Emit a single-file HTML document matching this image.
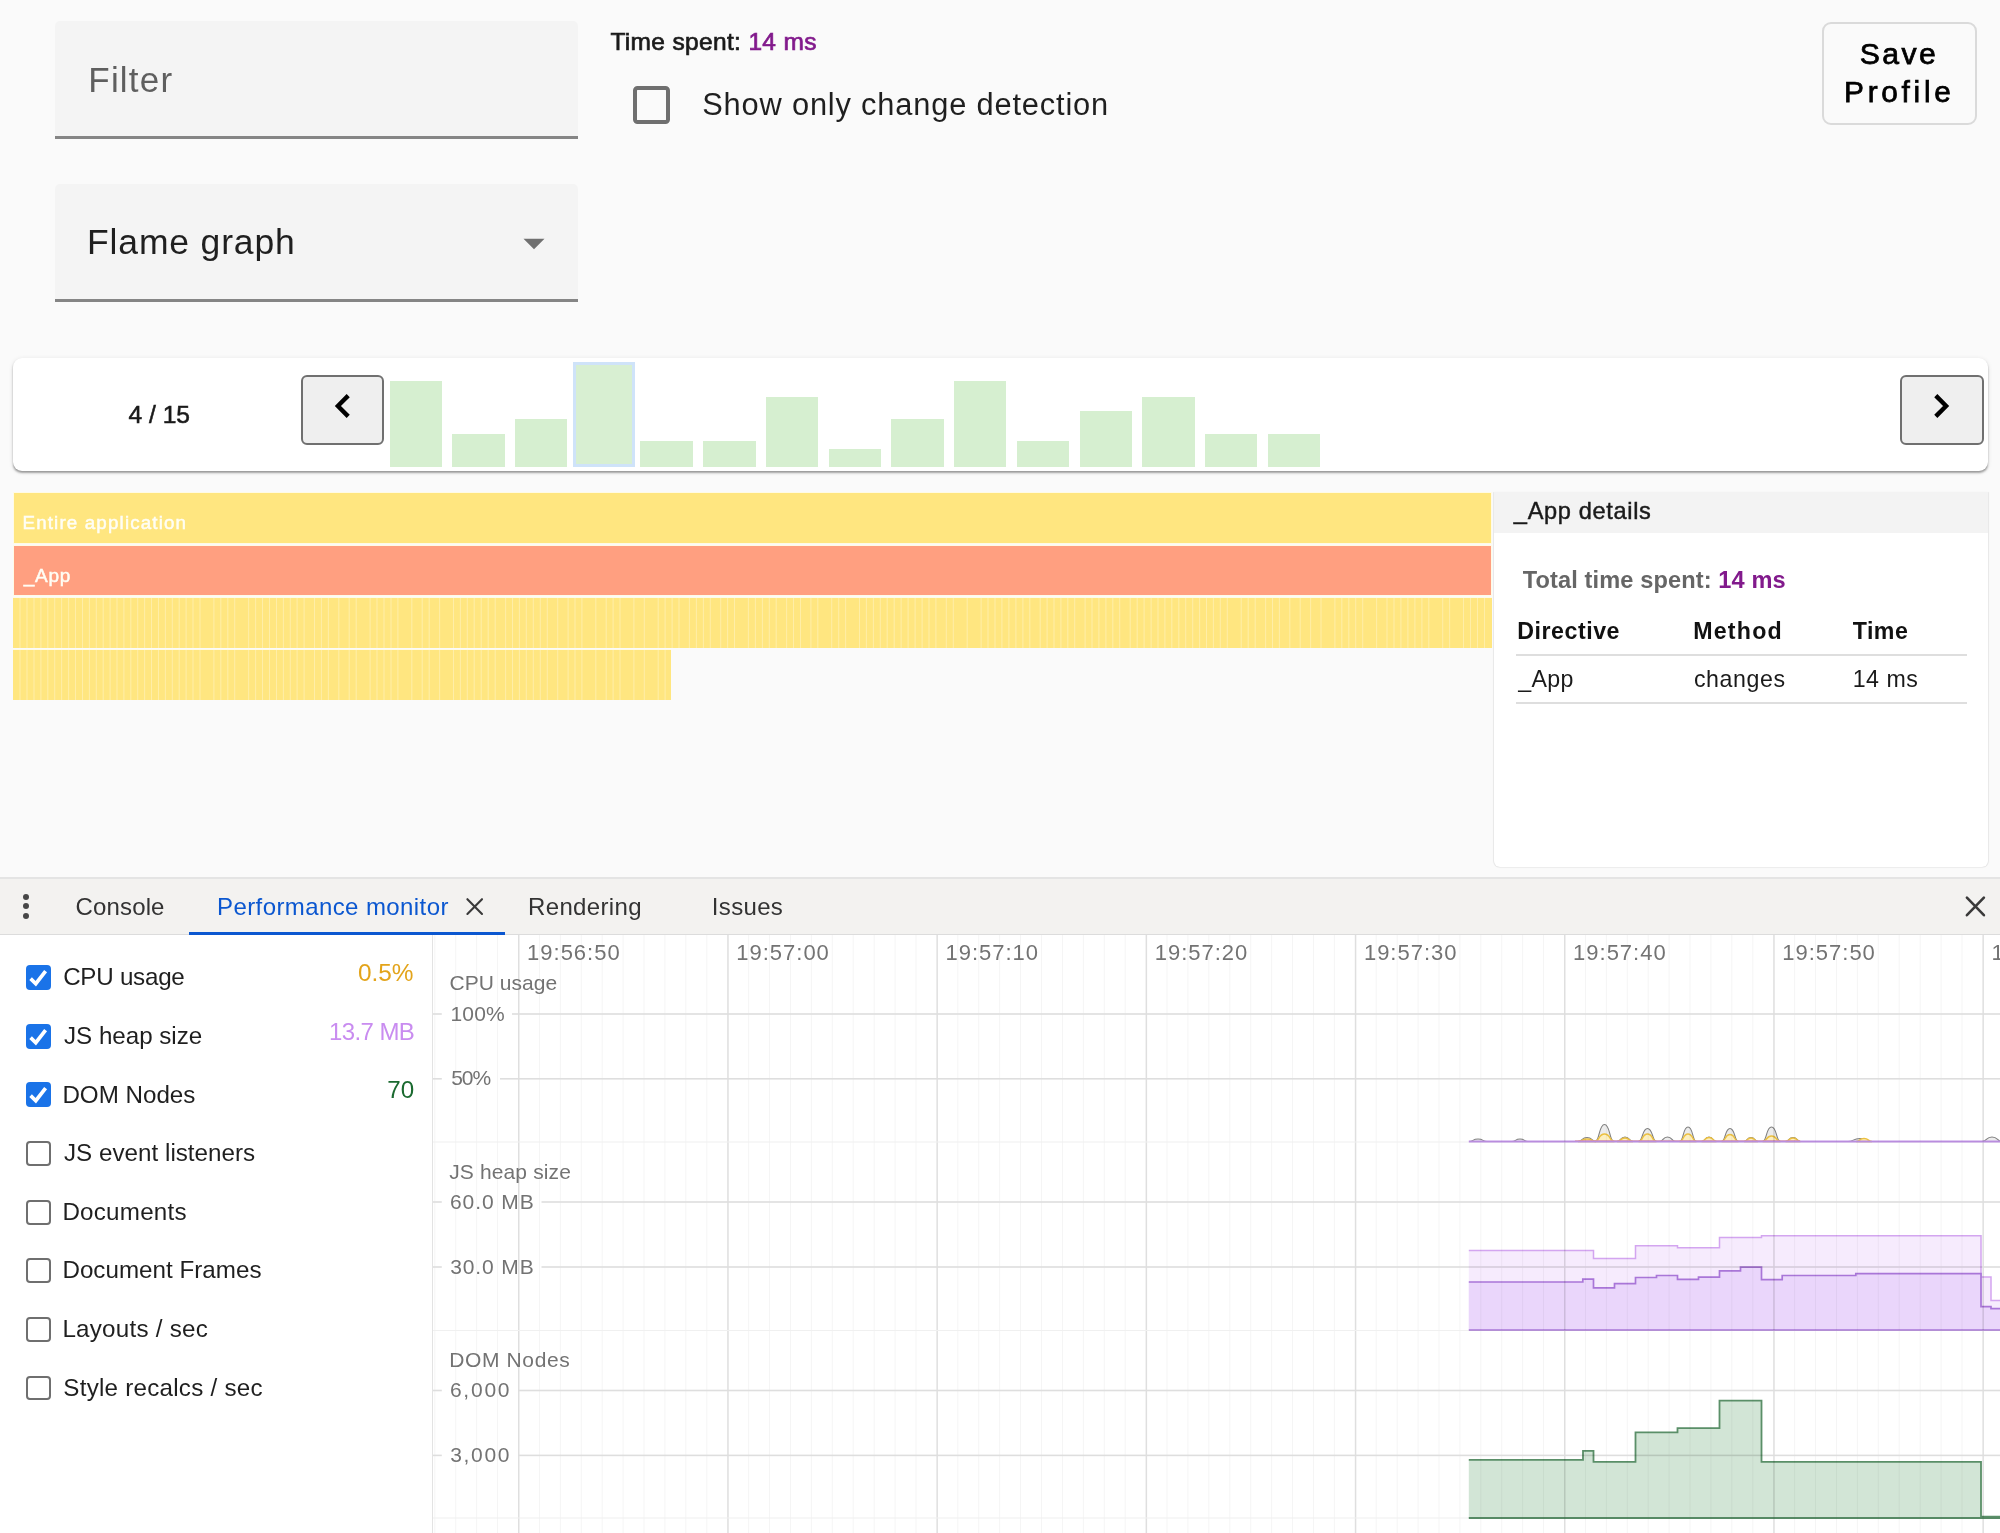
<!DOCTYPE html>
<html><head><meta charset="utf-8"><style>
html,body{margin:0;padding:0;}
body{width:2000px;height:1533px;overflow:hidden;position:relative;background:#fafafa;font-family:"Liberation Sans",sans-serif;}
.t{position:absolute;white-space:pre;}
.r{position:absolute;box-sizing:border-box;}
svg{position:absolute;}
</style></head><body>
<div class="r" style="left:55.00px;top:21.00px;width:523.00px;height:117.00px;background:#f4f4f4;border-radius:5px 5px 0 0;"></div>
<div class="r" style="left:55.00px;top:136.30px;width:523.00px;height:2.40px;background:#858585;"></div>
<div class="t" style="left:88.33px;top:62.37px;font-size:35.00px;line-height:35.00px;color:#5f5f5f;font-weight:normal;letter-spacing:1.195px;">Filter</div>
<div class="r" style="left:55.00px;top:184.00px;width:523.00px;height:117.00px;background:#f4f4f4;border-radius:5px 5px 0 0;"></div>
<div class="r" style="left:55.00px;top:299.20px;width:523.00px;height:2.40px;background:#858585;"></div>
<div class="t" style="left:87.09px;top:224.85px;font-size:35.50px;line-height:35.50px;color:#1f1f1f;font-weight:normal;letter-spacing:0.833px;">Flame graph</div>
<svg style="left:523px;top:238px" width="22" height="12"><path d="M0.5 0.8 L21.5 0.8 L11 11.2 Z" fill="#707070"/></svg>
<div class="t" style="left:610.45px;top:30.36px;font-size:24.50px;line-height:24.50px;color:#1a1a1a;font-weight:normal;letter-spacing:0.339px;-webkit-text-stroke:0.7px currentColor;">Time spent: <span style="color:#821a8c">14 ms</span></div>
<div class="r" style="left:632.50px;top:86.20px;width:37.10px;height:37.50px;border:4px solid #6f6f6f;border-radius:4.5px;"></div>
<div class="t" style="left:702.20px;top:89.53px;font-size:30.80px;line-height:30.80px;color:#1f1f1f;font-weight:normal;letter-spacing:0.829px;">Show only change detection</div>
<div class="r" style="left:1822.00px;top:22.00px;width:155.00px;height:103.00px;border:2px solid #dadada;border-radius:9px;"></div>
<div class="t" style="left:1859.63px;top:39.14px;font-size:30.20px;line-height:30.20px;color:#000;font-weight:normal;letter-spacing:2.426px;-webkit-text-stroke:0.75px currentColor;">Save</div>
<div class="t" style="left:1844.06px;top:77.37px;font-size:29.80px;line-height:29.80px;color:#000;font-weight:normal;letter-spacing:3.717px;-webkit-text-stroke:0.75px currentColor;">Profile</div>
<div class="r" style="left:13.00px;top:358.00px;width:1975.00px;height:113.00px;background:#fff;border-radius:9px;box-shadow:0 2px 2px -0.5px rgba(0,0,0,.3),0 1px 1px 0 rgba(0,0,0,.06),0 1px 5px 0 rgba(0,0,0,.1);"></div>
<div class="t" style="left:128.44px;top:402.58px;font-size:24.60px;line-height:24.60px;color:#1a1a1a;font-weight:normal;letter-spacing:0.010px;-webkit-text-stroke:0.55px currentColor;">4 / 15</div>
<div class="r" style="left:301.00px;top:375.00px;width:83.00px;height:69.60px;background:#efefef;border:2px solid #707070;border-radius:6px;"></div>
<svg style="left:330px;top:390px" width="24" height="32"><path d="M18.2 5.6 L7.9 16 L18.2 26.4" fill="none" stroke="#000" stroke-width="4.4"/></svg>
<div class="r" style="left:1900.00px;top:375.00px;width:83.50px;height:69.60px;background:#efefef;border:2px solid #707070;border-radius:6px;"></div>
<svg style="left:1930px;top:390px" width="24" height="32"><path d="M5.8 5.6 L16.1 16 L5.8 26.4" fill="none" stroke="#000" stroke-width="4.4"/></svg>
<div class="r" style="left:389.60px;top:381.00px;width:52.40px;height:85.70px;background:#d6efd0;"></div>
<div class="r" style="left:452.32px;top:433.50px;width:52.40px;height:33.20px;background:#d6efd0;"></div>
<div class="r" style="left:515.04px;top:418.80px;width:52.40px;height:47.90px;background:#d6efd0;"></div>
<div class="r" style="left:572.90px;top:362.40px;width:62.20px;height:104.50px;border:3.2px solid #cfe3f9;background:#d8efd2;"></div>
<div class="r" style="left:640.48px;top:440.80px;width:52.40px;height:25.90px;background:#d6efd0;"></div>
<div class="r" style="left:703.20px;top:440.80px;width:52.40px;height:25.90px;background:#d6efd0;"></div>
<div class="r" style="left:765.92px;top:396.70px;width:52.40px;height:70.00px;background:#d6efd0;"></div>
<div class="r" style="left:828.64px;top:449.20px;width:52.40px;height:17.50px;background:#d6efd0;"></div>
<div class="r" style="left:891.36px;top:418.80px;width:52.40px;height:47.90px;background:#d6efd0;"></div>
<div class="r" style="left:954.08px;top:381.00px;width:52.40px;height:85.70px;background:#d6efd0;"></div>
<div class="r" style="left:1016.80px;top:440.80px;width:52.40px;height:25.90px;background:#d6efd0;"></div>
<div class="r" style="left:1079.52px;top:411.40px;width:52.40px;height:55.30px;background:#d6efd0;"></div>
<div class="r" style="left:1142.24px;top:396.70px;width:52.40px;height:70.00px;background:#d6efd0;"></div>
<div class="r" style="left:1204.96px;top:433.50px;width:52.40px;height:33.20px;background:#d6efd0;"></div>
<div class="r" style="left:1267.68px;top:433.50px;width:52.40px;height:33.20px;background:#d6efd0;"></div>
<div class="r" style="left:13.00px;top:492.30px;width:1479.00px;height:51.70px;border:1px solid #fffbe6;background:#ffe680"></div>
<div class="r" style="left:13.00px;top:544.50px;width:1479.00px;height:51.50px;border:1px solid #fffbe6;background:#ff9f80"></div>
<div class="r" style="left:13.00px;top:597.50px;width:1479.00px;height:50.50px;background:#ffe680"></div>
<svg style="left:13px;top:597.5px" width="1479.0" height="50.5"><g fill="#fff6c8" opacity="0.55"><rect x="6.5" y="0" width="1" height="50.5"/><rect x="13.5" y="0" width="1" height="50.5"/><rect x="20.5" y="0" width="1" height="50.5"/><rect x="27.4" y="0" width="1" height="50.5"/><rect x="34.3" y="0" width="1" height="50.5"/><rect x="41.2" y="0" width="1" height="50.5"/><rect x="48.1" y="0" width="1" height="50.5"/><rect x="55.1" y="0" width="1" height="50.5"/><rect x="62.0" y="0" width="1" height="50.5"/><rect x="69.0" y="0" width="1" height="50.5"/><rect x="75.9" y="0" width="1" height="50.5"/><rect x="82.8" y="0" width="1" height="50.5"/><rect x="89.7" y="0" width="1" height="50.5"/><rect x="96.6" y="0" width="1" height="50.5"/><rect x="103.5" y="0" width="1" height="50.5"/><rect x="110.4" y="0" width="1" height="50.5"/><rect x="117.3" y="0" width="1" height="50.5"/><rect x="124.2" y="0" width="1" height="50.5"/><rect x="131.1" y="0" width="1" height="50.5"/><rect x="138.0" y="0" width="1" height="50.5"/><rect x="145.0" y="0" width="1" height="50.5"/><rect x="151.9" y="0" width="1" height="50.5"/><rect x="158.8" y="0" width="1" height="50.5"/><rect x="165.7" y="0" width="1" height="50.5"/><rect x="172.6" y="0" width="1" height="50.5"/><rect x="179.5" y="0" width="1" height="50.5"/><rect x="186.5" y="0" width="1" height="50.5"/><rect x="200.4" y="0" width="1" height="50.5"/><rect x="207.3" y="0" width="1" height="50.5"/><rect x="214.3" y="0" width="1" height="50.5"/><rect x="221.2" y="0" width="1" height="50.5"/><rect x="235.1" y="0" width="1" height="50.5"/><rect x="242.1" y="0" width="1" height="50.5"/><rect x="249.0" y="0" width="1" height="50.5"/><rect x="256.0" y="0" width="1" height="50.5"/><rect x="263.0" y="0" width="1" height="50.5"/><rect x="269.9" y="0" width="1" height="50.5"/><rect x="276.8" y="0" width="1" height="50.5"/><rect x="283.6" y="0" width="1" height="50.5"/><rect x="290.6" y="0" width="1" height="50.5"/><rect x="301.0" y="0" width="1" height="50.5"/><rect x="307.9" y="0" width="1" height="50.5"/><rect x="314.9" y="0" width="1" height="50.5"/><rect x="325.3" y="0" width="1" height="50.5"/><rect x="335.7" y="0" width="1" height="50.5"/><rect x="342.7" y="0" width="1" height="50.5"/><rect x="356.6" y="0" width="1" height="50.5"/><rect x="363.5" y="0" width="1" height="50.5"/><rect x="370.5" y="0" width="1" height="50.5"/><rect x="377.5" y="0" width="1" height="50.5"/><rect x="384.4" y="0" width="1" height="50.5"/><rect x="398.3" y="0" width="1" height="50.5"/><rect x="408.7" y="0" width="1" height="50.5"/><rect x="415.7" y="0" width="1" height="50.5"/><rect x="426.1" y="0" width="1" height="50.5"/><rect x="440.0" y="0" width="1" height="50.5"/><rect x="446.9" y="0" width="1" height="50.5"/><rect x="453.8" y="0" width="1" height="50.5"/><rect x="460.7" y="0" width="1" height="50.5"/><rect x="467.7" y="0" width="1" height="50.5"/><rect x="474.7" y="0" width="1" height="50.5"/><rect x="481.7" y="0" width="1" height="50.5"/><rect x="492.1" y="0" width="1" height="50.5"/><rect x="499.0" y="0" width="1" height="50.5"/><rect x="505.9" y="0" width="1" height="50.5"/><rect x="512.8" y="0" width="1" height="50.5"/><rect x="519.8" y="0" width="1" height="50.5"/><rect x="526.8" y="0" width="1" height="50.5"/><rect x="533.8" y="0" width="1" height="50.5"/><rect x="544.2" y="0" width="1" height="50.5"/><rect x="554.6" y="0" width="1" height="50.5"/><rect x="561.5" y="0" width="1" height="50.5"/><rect x="568.4" y="0" width="1" height="50.5"/><rect x="582.3" y="0" width="1" height="50.5"/><rect x="592.7" y="0" width="1" height="50.5"/><rect x="599.6" y="0" width="1" height="50.5"/><rect x="606.5" y="0" width="1" height="50.5"/><rect x="620.4" y="0" width="1" height="50.5"/><rect x="630.8" y="0" width="1" height="50.5"/><rect x="644.7" y="0" width="1" height="50.5"/><rect x="651.6" y="0" width="1" height="50.5"/><rect x="658.6" y="0" width="1" height="50.5"/><rect x="665.5" y="0" width="1" height="50.5"/><rect x="675.9" y="0" width="1" height="50.5"/><rect x="682.9" y="0" width="1" height="50.5"/><rect x="689.9" y="0" width="1" height="50.5"/><rect x="696.8" y="0" width="1" height="50.5"/><rect x="707.2" y="0" width="1" height="50.5"/><rect x="714.1" y="0" width="1" height="50.5"/><rect x="721.0" y="0" width="1" height="50.5"/><rect x="734.9" y="0" width="1" height="50.5"/><rect x="741.9" y="0" width="1" height="50.5"/><rect x="748.9" y="0" width="1" height="50.5"/><rect x="755.8" y="0" width="1" height="50.5"/><rect x="762.7" y="0" width="1" height="50.5"/><rect x="773.1" y="0" width="1" height="50.5"/><rect x="780.0" y="0" width="1" height="50.5"/><rect x="787.0" y="0" width="1" height="50.5"/><rect x="797.4" y="0" width="1" height="50.5"/><rect x="804.3" y="0" width="1" height="50.5"/><rect x="818.2" y="0" width="1" height="50.5"/><rect x="825.2" y="0" width="1" height="50.5"/><rect x="832.1" y="0" width="1" height="50.5"/><rect x="846.0" y="0" width="1" height="50.5"/><rect x="852.9" y="0" width="1" height="50.5"/><rect x="859.9" y="0" width="1" height="50.5"/><rect x="866.8" y="0" width="1" height="50.5"/><rect x="873.7" y="0" width="1" height="50.5"/><rect x="880.7" y="0" width="1" height="50.5"/><rect x="887.6" y="0" width="1" height="50.5"/><rect x="894.6" y="0" width="1" height="50.5"/><rect x="901.6" y="0" width="1" height="50.5"/><rect x="908.6" y="0" width="1" height="50.5"/><rect x="915.5" y="0" width="1" height="50.5"/><rect x="922.4" y="0" width="1" height="50.5"/><rect x="932.8" y="0" width="1" height="50.5"/><rect x="939.8" y="0" width="1" height="50.5"/><rect x="953.7" y="0" width="1" height="50.5"/><rect x="967.6" y="0" width="1" height="50.5"/><rect x="974.5" y="0" width="1" height="50.5"/><rect x="981.5" y="0" width="1" height="50.5"/><rect x="988.4" y="0" width="1" height="50.5"/><rect x="995.4" y="0" width="1" height="50.5"/><rect x="1002.4" y="0" width="1" height="50.5"/><rect x="1009.4" y="0" width="1" height="50.5"/><rect x="1016.3" y="0" width="1" height="50.5"/><rect x="1026.7" y="0" width="1" height="50.5"/><rect x="1033.6" y="0" width="1" height="50.5"/><rect x="1040.5" y="0" width="1" height="50.5"/><rect x="1047.4" y="0" width="1" height="50.5"/><rect x="1054.3" y="0" width="1" height="50.5"/><rect x="1061.2" y="0" width="1" height="50.5"/><rect x="1071.6" y="0" width="1" height="50.5"/><rect x="1078.5" y="0" width="1" height="50.5"/><rect x="1085.4" y="0" width="1" height="50.5"/><rect x="1092.4" y="0" width="1" height="50.5"/><rect x="1099.3" y="0" width="1" height="50.5"/><rect x="1106.2" y="0" width="1" height="50.5"/><rect x="1116.7" y="0" width="1" height="50.5"/><rect x="1123.7" y="0" width="1" height="50.5"/><rect x="1130.6" y="0" width="1" height="50.5"/><rect x="1137.6" y="0" width="1" height="50.5"/><rect x="1144.5" y="0" width="1" height="50.5"/><rect x="1151.4" y="0" width="1" height="50.5"/><rect x="1158.3" y="0" width="1" height="50.5"/><rect x="1165.3" y="0" width="1" height="50.5"/><rect x="1172.2" y="0" width="1" height="50.5"/><rect x="1179.2" y="0" width="1" height="50.5"/><rect x="1186.1" y="0" width="1" height="50.5"/><rect x="1193.0" y="0" width="1" height="50.5"/><rect x="1199.9" y="0" width="1" height="50.5"/><rect x="1206.8" y="0" width="1" height="50.5"/><rect x="1213.8" y="0" width="1" height="50.5"/><rect x="1227.7" y="0" width="1" height="50.5"/><rect x="1234.7" y="0" width="1" height="50.5"/><rect x="1241.7" y="0" width="1" height="50.5"/><rect x="1252.1" y="0" width="1" height="50.5"/><rect x="1259.0" y="0" width="1" height="50.5"/><rect x="1265.9" y="0" width="1" height="50.5"/><rect x="1276.3" y="0" width="1" height="50.5"/><rect x="1286.7" y="0" width="1" height="50.5"/><rect x="1297.1" y="0" width="1" height="50.5"/><rect x="1307.5" y="0" width="1" height="50.5"/><rect x="1321.4" y="0" width="1" height="50.5"/><rect x="1328.3" y="0" width="1" height="50.5"/><rect x="1335.3" y="0" width="1" height="50.5"/><rect x="1342.2" y="0" width="1" height="50.5"/><rect x="1349.2" y="0" width="1" height="50.5"/><rect x="1363.1" y="0" width="1" height="50.5"/><rect x="1373.5" y="0" width="1" height="50.5"/><rect x="1380.5" y="0" width="1" height="50.5"/><rect x="1387.4" y="0" width="1" height="50.5"/><rect x="1394.4" y="0" width="1" height="50.5"/><rect x="1401.4" y="0" width="1" height="50.5"/><rect x="1408.4" y="0" width="1" height="50.5"/><rect x="1415.3" y="0" width="1" height="50.5"/><rect x="1429.2" y="0" width="1" height="50.5"/><rect x="1436.1" y="0" width="1" height="50.5"/><rect x="1450.0" y="0" width="1" height="50.5"/><rect x="1457.0" y="0" width="1" height="50.5"/><rect x="1464.0" y="0" width="1" height="50.5"/><rect x="1471.0" y="0" width="1" height="50.5"/></g></svg>
<div class="r" style="left:13.00px;top:596.50px;width:1479.00px;height:1.00px;background:#fffbe6"></div>
<div class="r" style="left:13.00px;top:649.80px;width:658.30px;height:50.40px;background:#ffe680"></div>
<svg style="left:13px;top:649.8px" width="658.3" height="50.4"><g fill="#fff6c8" opacity="0.55"><rect x="6.5" y="0" width="1" height="50.4"/><rect x="13.5" y="0" width="1" height="50.4"/><rect x="20.5" y="0" width="1" height="50.4"/><rect x="27.4" y="0" width="1" height="50.4"/><rect x="34.3" y="0" width="1" height="50.4"/><rect x="41.2" y="0" width="1" height="50.4"/><rect x="48.1" y="0" width="1" height="50.4"/><rect x="55.1" y="0" width="1" height="50.4"/><rect x="62.0" y="0" width="1" height="50.4"/><rect x="69.0" y="0" width="1" height="50.4"/><rect x="75.9" y="0" width="1" height="50.4"/><rect x="82.8" y="0" width="1" height="50.4"/><rect x="89.7" y="0" width="1" height="50.4"/><rect x="96.6" y="0" width="1" height="50.4"/><rect x="103.5" y="0" width="1" height="50.4"/><rect x="110.4" y="0" width="1" height="50.4"/><rect x="117.3" y="0" width="1" height="50.4"/><rect x="124.2" y="0" width="1" height="50.4"/><rect x="131.1" y="0" width="1" height="50.4"/><rect x="138.0" y="0" width="1" height="50.4"/><rect x="145.0" y="0" width="1" height="50.4"/><rect x="151.9" y="0" width="1" height="50.4"/><rect x="158.8" y="0" width="1" height="50.4"/><rect x="165.7" y="0" width="1" height="50.4"/><rect x="172.6" y="0" width="1" height="50.4"/><rect x="179.5" y="0" width="1" height="50.4"/><rect x="186.5" y="0" width="1" height="50.4"/><rect x="200.4" y="0" width="1" height="50.4"/><rect x="207.3" y="0" width="1" height="50.4"/><rect x="214.3" y="0" width="1" height="50.4"/><rect x="221.2" y="0" width="1" height="50.4"/><rect x="235.1" y="0" width="1" height="50.4"/><rect x="242.1" y="0" width="1" height="50.4"/><rect x="249.0" y="0" width="1" height="50.4"/><rect x="256.0" y="0" width="1" height="50.4"/><rect x="263.0" y="0" width="1" height="50.4"/><rect x="269.9" y="0" width="1" height="50.4"/><rect x="276.8" y="0" width="1" height="50.4"/><rect x="283.6" y="0" width="1" height="50.4"/><rect x="290.6" y="0" width="1" height="50.4"/><rect x="301.0" y="0" width="1" height="50.4"/><rect x="307.9" y="0" width="1" height="50.4"/><rect x="314.9" y="0" width="1" height="50.4"/><rect x="325.3" y="0" width="1" height="50.4"/><rect x="335.7" y="0" width="1" height="50.4"/><rect x="342.7" y="0" width="1" height="50.4"/><rect x="356.6" y="0" width="1" height="50.4"/><rect x="363.5" y="0" width="1" height="50.4"/><rect x="370.5" y="0" width="1" height="50.4"/><rect x="377.5" y="0" width="1" height="50.4"/><rect x="384.4" y="0" width="1" height="50.4"/><rect x="398.3" y="0" width="1" height="50.4"/><rect x="408.7" y="0" width="1" height="50.4"/><rect x="415.7" y="0" width="1" height="50.4"/><rect x="426.1" y="0" width="1" height="50.4"/><rect x="440.0" y="0" width="1" height="50.4"/><rect x="446.9" y="0" width="1" height="50.4"/><rect x="453.8" y="0" width="1" height="50.4"/><rect x="460.7" y="0" width="1" height="50.4"/><rect x="467.7" y="0" width="1" height="50.4"/><rect x="474.7" y="0" width="1" height="50.4"/><rect x="481.7" y="0" width="1" height="50.4"/><rect x="492.1" y="0" width="1" height="50.4"/><rect x="499.0" y="0" width="1" height="50.4"/><rect x="505.9" y="0" width="1" height="50.4"/><rect x="512.8" y="0" width="1" height="50.4"/><rect x="519.8" y="0" width="1" height="50.4"/><rect x="526.8" y="0" width="1" height="50.4"/><rect x="533.8" y="0" width="1" height="50.4"/><rect x="544.2" y="0" width="1" height="50.4"/><rect x="554.6" y="0" width="1" height="50.4"/><rect x="561.5" y="0" width="1" height="50.4"/><rect x="568.4" y="0" width="1" height="50.4"/><rect x="582.3" y="0" width="1" height="50.4"/><rect x="592.7" y="0" width="1" height="50.4"/><rect x="599.6" y="0" width="1" height="50.4"/><rect x="606.5" y="0" width="1" height="50.4"/><rect x="620.4" y="0" width="1" height="50.4"/><rect x="630.8" y="0" width="1" height="50.4"/><rect x="644.7" y="0" width="1" height="50.4"/><rect x="651.6" y="0" width="1" height="50.4"/></g></svg>
<div class="r" style="left:13.00px;top:648.80px;width:658.30px;height:1.00px;background:#fffbe6"></div>
<div class="t" style="left:22.46px;top:513.79px;font-size:18.80px;line-height:18.80px;color:#fffef5;font-weight:normal;letter-spacing:1.149px;-webkit-text-stroke:0.5px currentColor;">Entire application</div>
<div class="t" style="left:23.79px;top:565.82px;font-size:19.00px;line-height:19.00px;color:#fffef5;font-weight:normal;letter-spacing:0.712px;-webkit-text-stroke:0.5px currentColor;">_App</div>
<div class="r" style="left:1494.00px;top:492.00px;width:494.00px;height:375.00px;background:#fff;border-radius:0 0 6px 6px;box-shadow:-1px 0 1px rgba(0,0,0,.07),1px 0 1px rgba(0,0,0,.07),0 1px 1px rgba(0,0,0,.05);"></div>
<div class="r" style="left:1494.00px;top:492.00px;width:494.00px;height:41.00px;background:#f3f3f3;"></div>
<div class="t" style="left:1513.86px;top:500.02px;font-size:23.60px;line-height:23.60px;color:#1a1a1a;font-weight:normal;letter-spacing:0.646px;-webkit-text-stroke:0.45px currentColor;">_App details</div>
<div class="t" style="left:1522.73px;top:569.32px;font-size:23.60px;line-height:23.60px;color:#666;font-weight:bold;letter-spacing:0.111px;">Total time spent: <span style="color:#821a8c">14 ms</span></div>
<div class="t" style="left:1517.20px;top:620.06px;font-size:23.20px;line-height:23.20px;color:#111;font-weight:bold;letter-spacing:0.542px;">Directive</div>
<div class="t" style="left:1693.25px;top:620.06px;font-size:23.20px;line-height:23.20px;color:#111;font-weight:bold;letter-spacing:1.203px;">Method</div>
<div class="t" style="left:1852.74px;top:620.06px;font-size:23.20px;line-height:23.20px;color:#111;font-weight:bold;letter-spacing:0.468px;">Time</div>
<div class="r" style="left:1516.00px;top:654.00px;width:451.00px;height:2.00px;background:#dedede"></div>
<div class="t" style="left:1518.35px;top:668.36px;font-size:23.20px;line-height:23.20px;color:#1a1a1a;font-weight:normal;letter-spacing:0.314px;">_App</div>
<div class="t" style="left:1693.91px;top:668.36px;font-size:23.20px;line-height:23.20px;color:#1a1a1a;font-weight:normal;letter-spacing:0.602px;">changes</div>
<div class="t" style="left:1852.73px;top:668.36px;font-size:23.20px;line-height:23.20px;color:#1a1a1a;font-weight:normal;letter-spacing:0.482px;">14 ms</div>
<div class="r" style="left:1516.00px;top:702.00px;width:451.00px;height:2.00px;background:#dedede"></div>
<div class="r" style="left:0.00px;top:878.00px;width:2000.00px;height:57.00px;background:#f3f2f0"></div>
<div class="r" style="left:0.00px;top:876.80px;width:2000.00px;height:2.00px;background:#e4e4e4"></div>
<div class="r" style="left:0.00px;top:934.00px;width:2000.00px;height:1.00px;background:#dcdcdc"></div>
<div class="r" style="left:0.00px;top:935.00px;width:2000.00px;height:598.00px;background:#fff"></div>
<div class="r" style="left:22.80px;top:893.60px;width:6.00px;height:6.00px;background:#474747;border-radius:50%"></div>
<div class="r" style="left:22.80px;top:903.10px;width:6.00px;height:6.00px;background:#474747;border-radius:50%"></div>
<div class="r" style="left:22.80px;top:912.60px;width:6.00px;height:6.00px;background:#474747;border-radius:50%"></div>
<div class="t" style="left:75.58px;top:894.88px;font-size:24.00px;line-height:24.00px;color:#333;font-weight:normal;letter-spacing:0.138px;">Console</div>
<div class="t" style="left:217.03px;top:894.88px;font-size:24.00px;line-height:24.00px;color:#0b57d0;font-weight:normal;letter-spacing:0.405px;">Performance monitor</div>
<svg style="left:464px;top:895px" width="22" height="22"><path d="M3.4 4.2 L18 18.9 M18 4.2 L3.4 18.9" stroke="#3a3a3a" stroke-width="2.1" stroke-linecap="round"/></svg>
<div class="t" style="left:528.03px;top:894.88px;font-size:24.00px;line-height:24.00px;color:#333;font-weight:normal;letter-spacing:0.347px;">Rendering</div>
<div class="t" style="left:711.79px;top:894.88px;font-size:24.00px;line-height:24.00px;color:#333;font-weight:normal;letter-spacing:0.344px;">Issues</div>
<div class="r" style="left:189.00px;top:931.80px;width:316.00px;height:3.70px;background:#0b57d0"></div>
<svg style="left:1964px;top:895px" width="23" height="23"><path d="M2.9 2.6 L19.9 20.2 M19.9 2.6 L2.9 20.2" stroke="#3a3a3a" stroke-width="2.6" stroke-linecap="round"/></svg>
<div class="r" style="left:432.00px;top:935.00px;width:1.00px;height:598.00px;background:#e3e3e3"></div>
<div class="r" style="left:25.8px;top:965.20px;width:24.8px;height:24.8px;background:#1a73e8;border-radius:4px;"><svg style="left:0;top:0" width="25" height="25" viewBox="0 0 25 25"><path d="M4.6 13.6 L9.8 18.7 L19.6 6.2" fill="none" stroke="#fff" stroke-width="3.7"/></svg></div>
<div class="t" style="left:63.17px;top:965.31px;font-size:24.20px;line-height:24.20px;color:#1f1f1f;font-weight:normal;letter-spacing:-0.256px;">CPU usage</div>
<div class="r" style="left:25.8px;top:1023.83px;width:24.8px;height:24.8px;background:#1a73e8;border-radius:4px;"><svg style="left:0;top:0" width="25" height="25" viewBox="0 0 25 25"><path d="M4.6 13.6 L9.8 18.7 L19.6 6.2" fill="none" stroke="#fff" stroke-width="3.7"/></svg></div>
<div class="t" style="left:64.02px;top:1023.94px;font-size:24.20px;line-height:24.20px;color:#1f1f1f;font-weight:normal;letter-spacing:-0.028px;">JS heap size</div>
<div class="r" style="left:25.8px;top:1082.46px;width:24.8px;height:24.8px;background:#1a73e8;border-radius:4px;"><svg style="left:0;top:0" width="25" height="25" viewBox="0 0 25 25"><path d="M4.6 13.6 L9.8 18.7 L19.6 6.2" fill="none" stroke="#fff" stroke-width="3.7"/></svg></div>
<div class="t" style="left:62.41px;top:1082.57px;font-size:24.20px;line-height:24.20px;color:#1f1f1f;font-weight:normal;letter-spacing:-0.009px;">DOM Nodes</div>
<div class="r" style="left:25.80px;top:1141.09px;width:24.80px;height:24.80px;border:2px solid #6f6f6f;border-radius:4px;"></div>
<div class="t" style="left:64.02px;top:1141.20px;font-size:24.20px;line-height:24.20px;color:#1f1f1f;font-weight:normal;letter-spacing:0.015px;">JS event listeners</div>
<div class="r" style="left:25.80px;top:1199.72px;width:24.80px;height:24.80px;border:2px solid #6f6f6f;border-radius:4px;"></div>
<div class="t" style="left:62.41px;top:1199.83px;font-size:24.20px;line-height:24.20px;color:#1f1f1f;font-weight:normal;letter-spacing:0.233px;">Documents</div>
<div class="r" style="left:25.80px;top:1258.35px;width:24.80px;height:24.80px;border:2px solid #6f6f6f;border-radius:4px;"></div>
<div class="t" style="left:62.41px;top:1258.46px;font-size:24.20px;line-height:24.20px;color:#1f1f1f;font-weight:normal;letter-spacing:0.016px;">Document Frames</div>
<div class="r" style="left:25.80px;top:1316.98px;width:24.80px;height:24.80px;border:2px solid #6f6f6f;border-radius:4px;"></div>
<div class="t" style="left:62.41px;top:1317.09px;font-size:24.20px;line-height:24.20px;color:#1f1f1f;font-weight:normal;letter-spacing:0.236px;">Layouts / sec</div>
<div class="r" style="left:25.80px;top:1375.61px;width:24.80px;height:24.80px;border:2px solid #6f6f6f;border-radius:4px;"></div>
<div class="t" style="left:63.30px;top:1375.72px;font-size:24.20px;line-height:24.20px;color:#1f1f1f;font-weight:normal;letter-spacing:0.241px;">Style recalcs / sec</div>
<div class="t" style="left:358.05px;top:960.75px;font-size:24.40px;line-height:24.40px;color:#e3a41b;font-weight:normal;letter-spacing:-0.031px;">0.5%</div>
<div class="t" style="left:328.97px;top:1019.88px;font-size:24.00px;line-height:24.00px;color:#c98cf0;font-weight:normal;letter-spacing:-0.581px;">13.7 MB</div>
<div class="t" style="left:387.26px;top:1078.21px;font-size:24.20px;line-height:24.20px;color:#1b6a30;font-weight:normal;letter-spacing:0.068px;">70</div>
<svg style="left:433px;top:935px" width="1567" height="598"><rect x="1.32" y="0" width="1" height="598" fill="#f5f5f5"/><rect x="22.24" y="0" width="1" height="598" fill="#f5f5f5"/><rect x="43.16" y="0" width="1" height="598" fill="#f5f5f5"/><rect x="64.08" y="0" width="1" height="598" fill="#f5f5f5"/><rect x="85.00" y="0" width="1.5" height="598" fill="#dfdfdf"/><rect x="105.92" y="0" width="1" height="598" fill="#f5f5f5"/><rect x="126.84" y="0" width="1" height="598" fill="#f5f5f5"/><rect x="147.76" y="0" width="1" height="598" fill="#f5f5f5"/><rect x="168.68" y="0" width="1" height="598" fill="#f5f5f5"/><rect x="189.60" y="0" width="1" height="598" fill="#f5f5f5"/><rect x="210.52" y="0" width="1" height="598" fill="#f5f5f5"/><rect x="231.44" y="0" width="1" height="598" fill="#f5f5f5"/><rect x="252.36" y="0" width="1" height="598" fill="#f5f5f5"/><rect x="273.28" y="0" width="1" height="598" fill="#f5f5f5"/><rect x="294.20" y="0" width="1.5" height="598" fill="#dfdfdf"/><rect x="315.12" y="0" width="1" height="598" fill="#f5f5f5"/><rect x="336.04" y="0" width="1" height="598" fill="#f5f5f5"/><rect x="356.96" y="0" width="1" height="598" fill="#f5f5f5"/><rect x="377.88" y="0" width="1" height="598" fill="#f5f5f5"/><rect x="398.80" y="0" width="1" height="598" fill="#f5f5f5"/><rect x="419.72" y="0" width="1" height="598" fill="#f5f5f5"/><rect x="440.64" y="0" width="1" height="598" fill="#f5f5f5"/><rect x="461.56" y="0" width="1" height="598" fill="#f5f5f5"/><rect x="482.48" y="0" width="1" height="598" fill="#f5f5f5"/><rect x="503.40" y="0" width="1.5" height="598" fill="#dfdfdf"/><rect x="524.32" y="0" width="1" height="598" fill="#f5f5f5"/><rect x="545.24" y="0" width="1" height="598" fill="#f5f5f5"/><rect x="566.16" y="0" width="1" height="598" fill="#f5f5f5"/><rect x="587.08" y="0" width="1" height="598" fill="#f5f5f5"/><rect x="608.00" y="0" width="1" height="598" fill="#f5f5f5"/><rect x="628.92" y="0" width="1" height="598" fill="#f5f5f5"/><rect x="649.84" y="0" width="1" height="598" fill="#f5f5f5"/><rect x="670.76" y="0" width="1" height="598" fill="#f5f5f5"/><rect x="691.68" y="0" width="1" height="598" fill="#f5f5f5"/><rect x="712.60" y="0" width="1.5" height="598" fill="#dfdfdf"/><rect x="733.52" y="0" width="1" height="598" fill="#f5f5f5"/><rect x="754.44" y="0" width="1" height="598" fill="#f5f5f5"/><rect x="775.36" y="0" width="1" height="598" fill="#f5f5f5"/><rect x="796.28" y="0" width="1" height="598" fill="#f5f5f5"/><rect x="817.20" y="0" width="1" height="598" fill="#f5f5f5"/><rect x="838.12" y="0" width="1" height="598" fill="#f5f5f5"/><rect x="859.04" y="0" width="1" height="598" fill="#f5f5f5"/><rect x="879.96" y="0" width="1" height="598" fill="#f5f5f5"/><rect x="900.88" y="0" width="1" height="598" fill="#f5f5f5"/><rect x="921.80" y="0" width="1.5" height="598" fill="#dfdfdf"/><rect x="942.72" y="0" width="1" height="598" fill="#f5f5f5"/><rect x="963.64" y="0" width="1" height="598" fill="#f5f5f5"/><rect x="984.56" y="0" width="1" height="598" fill="#f5f5f5"/><rect x="1005.48" y="0" width="1" height="598" fill="#f5f5f5"/><rect x="1026.40" y="0" width="1" height="598" fill="#f5f5f5"/><rect x="1047.32" y="0" width="1" height="598" fill="#f5f5f5"/><rect x="1068.24" y="0" width="1" height="598" fill="#f5f5f5"/><rect x="1089.16" y="0" width="1" height="598" fill="#f5f5f5"/><rect x="1110.08" y="0" width="1" height="598" fill="#f5f5f5"/><rect x="1131.00" y="0" width="1.5" height="598" fill="#dfdfdf"/><rect x="1151.92" y="0" width="1" height="598" fill="#f5f5f5"/><rect x="1172.84" y="0" width="1" height="598" fill="#f5f5f5"/><rect x="1193.76" y="0" width="1" height="598" fill="#f5f5f5"/><rect x="1214.68" y="0" width="1" height="598" fill="#f5f5f5"/><rect x="1235.60" y="0" width="1" height="598" fill="#f5f5f5"/><rect x="1256.52" y="0" width="1" height="598" fill="#f5f5f5"/><rect x="1277.44" y="0" width="1" height="598" fill="#f5f5f5"/><rect x="1298.36" y="0" width="1" height="598" fill="#f5f5f5"/><rect x="1319.28" y="0" width="1" height="598" fill="#f5f5f5"/><rect x="1340.20" y="0" width="1.5" height="598" fill="#dfdfdf"/><rect x="1361.12" y="0" width="1" height="598" fill="#f5f5f5"/><rect x="1382.04" y="0" width="1" height="598" fill="#f5f5f5"/><rect x="1402.96" y="0" width="1" height="598" fill="#f5f5f5"/><rect x="1423.88" y="0" width="1" height="598" fill="#f5f5f5"/><rect x="1444.80" y="0" width="1" height="598" fill="#f5f5f5"/><rect x="1465.72" y="0" width="1" height="598" fill="#f5f5f5"/><rect x="1486.64" y="0" width="1" height="598" fill="#f5f5f5"/><rect x="1507.56" y="0" width="1" height="598" fill="#f5f5f5"/><rect x="1528.48" y="0" width="1" height="598" fill="#f5f5f5"/><rect x="1549.40" y="0" width="1.5" height="598" fill="#dfdfdf"/><rect x="0" y="78.20" width="8.8" height="1.6" fill="#dedede"/><rect x="79.00" y="78.20" width="1488.00" height="1.6" fill="#dedede"/><rect x="0" y="143.00" width="8.8" height="1.6" fill="#dedede"/><rect x="67.00" y="143.00" width="1500.00" height="1.6" fill="#dedede"/><rect x="0" y="206.50" width="1567" height="1" fill="#f0f0f0"/><rect x="0" y="266.20" width="8.8" height="1.6" fill="#dedede"/><rect x="108.50" y="266.20" width="1458.50" height="1.6" fill="#dedede"/><rect x="0" y="331.20" width="8.8" height="1.6" fill="#dedede"/><rect x="108.50" y="331.20" width="1458.50" height="1.6" fill="#dedede"/><rect x="0" y="395.00" width="1567" height="1" fill="#f0f0f0"/><rect x="0" y="454.70" width="8.8" height="1.6" fill="#dedede"/><rect x="85.50" y="454.70" width="1481.50" height="1.6" fill="#dedede"/><rect x="0" y="519.60" width="8.8" height="1.6" fill="#dedede"/><rect x="85.50" y="519.60" width="1481.50" height="1.6" fill="#dedede"/><rect x="0" y="582.50" width="1567" height="1" fill="#f0f0f0"/></svg>
<div class="t" style="left:527.12px;top:942.38px;font-size:22.00px;line-height:22.00px;color:#737373;font-weight:normal;letter-spacing:0.985px;">19:56:50</div>
<div class="t" style="left:736.32px;top:942.38px;font-size:22.00px;line-height:22.00px;color:#737373;font-weight:normal;letter-spacing:0.985px;">19:57:00</div>
<div class="t" style="left:945.52px;top:942.38px;font-size:22.00px;line-height:22.00px;color:#737373;font-weight:normal;letter-spacing:0.985px;">19:57:10</div>
<div class="t" style="left:1154.72px;top:942.38px;font-size:22.00px;line-height:22.00px;color:#737373;font-weight:normal;letter-spacing:0.985px;">19:57:20</div>
<div class="t" style="left:1363.92px;top:942.38px;font-size:22.00px;line-height:22.00px;color:#737373;font-weight:normal;letter-spacing:0.985px;">19:57:30</div>
<div class="t" style="left:1573.12px;top:942.38px;font-size:22.00px;line-height:22.00px;color:#737373;font-weight:normal;letter-spacing:0.985px;">19:57:40</div>
<div class="t" style="left:1782.32px;top:942.38px;font-size:22.00px;line-height:22.00px;color:#737373;font-weight:normal;letter-spacing:0.985px;">19:57:50</div>
<div class="t" style="left:1991.52px;top:942.38px;font-size:22.00px;line-height:22.00px;color:#737373;font-weight:normal;letter-spacing:0.985px;">19:58:00</div>
<div class="t" style="left:449.43px;top:972.22px;font-size:21.00px;line-height:21.00px;color:#737373;font-weight:normal;letter-spacing:0.051px;">CPU usage</div>
<div class="t" style="left:450.40px;top:1002.72px;font-size:21.00px;line-height:21.00px;color:#737373;font-weight:normal;letter-spacing:0.213px;">100%</div>
<div class="t" style="left:451.16px;top:1067.22px;font-size:21.00px;line-height:21.00px;color:#737373;font-weight:normal;letter-spacing:-0.971px;">50%</div>
<div class="t" style="left:449.17px;top:1161.02px;font-size:21.00px;line-height:21.00px;color:#737373;font-weight:normal;letter-spacing:0.139px;">JS heap size</div>
<div class="t" style="left:449.93px;top:1190.92px;font-size:21.00px;line-height:21.00px;color:#737373;font-weight:normal;letter-spacing:0.928px;">60.0 MB</div>
<div class="t" style="left:450.20px;top:1255.52px;font-size:21.00px;line-height:21.00px;color:#737373;font-weight:normal;letter-spacing:0.883px;">30.0 MB</div>
<div class="t" style="left:449.28px;top:1349.22px;font-size:21.00px;line-height:21.00px;color:#737373;font-weight:normal;letter-spacing:0.619px;">DOM Nodes</div>
<div class="t" style="left:449.93px;top:1378.62px;font-size:21.00px;line-height:21.00px;color:#737373;font-weight:normal;letter-spacing:1.759px;">6,000</div>
<div class="t" style="left:450.20px;top:1444.02px;font-size:21.00px;line-height:21.00px;color:#737373;font-weight:normal;letter-spacing:1.692px;">3,000</div>
<svg style="left:0;top:0;mix-blend-mode:multiply" width="2000" height="1533"><path d="M1468.80 1250.60 H1593.50 V1258.40 H1635.50 V1245.80 H1677.50 V1247.80 H1719.50 V1237.40 H1761.50 V1235.80 H1981.00 V1330 H1468.8 Z" fill="#f6ebfd"/><path d="M1468.80 1250.60 H1593.50 V1258.40 H1635.50 V1245.80 H1677.50 V1247.80 H1719.50 V1237.40 H1761.50 V1235.80 H1981.00 V1330" fill="none" stroke="#d3a5f0" stroke-width="1.5"/><path d="M1981 1277 H1991 V1300.4 H2000 V1330 H1981 Z" fill="#f6ebfd"/><path d="M1981 1277 H1991 V1300.4 H2000" fill="none" stroke="#d3a5f0" stroke-width="1.5"/><path d="M1468.80 1282.00 H1582.80 V1279.20 H1593.50 V1287.80 H1614.50 V1283.60 H1635.50 V1277.50 H1656.50 V1275.50 H1677.50 V1279.40 H1698.50 V1277.20 H1719.50 V1270.80 H1740.50 V1267.10 H1761.50 V1279.70 H1782.20 V1275.50 H1855.80 V1273.60 H1981.00 V1306.6 H1991 V1308.6 H2000 V1330 H1468.8 Z" fill="#ead6fb"/><path d="M1468.80 1282.00 H1582.80 V1279.20 H1593.50 V1287.80 H1614.50 V1283.60 H1635.50 V1277.50 H1656.50 V1275.50 H1677.50 V1279.40 H1698.50 V1277.20 H1719.50 V1270.80 H1740.50 V1267.10 H1761.50 V1279.70 H1782.20 V1275.50 H1855.80 V1273.60 H1981.00 V1306.6 H1991 V1308.6 H2000" fill="none" stroke="#a976d8" stroke-width="1.7"/><path d="M1468.8 1330 H2000" stroke="#a976d8" stroke-width="1.7"/><path d="M1468.80 1459.80 H1583.00 V1450.80 H1593.50 V1461.80 H1635.50 V1432.40 H1677.50 V1428.20 H1719.50 V1400.70 H1761.50 V1461.80 H1981.00 V1516.7 H2000 V1518 H1468.8 Z" fill="#d2e5d6"/><path d="M1468.80 1459.80 H1583.00 V1450.80 H1593.50 V1461.80 H1635.50 V1432.40 H1677.50 V1428.20 H1719.50 V1400.70 H1761.50 V1461.80 H1981.00 V1516.7 H2000" fill="none" stroke="#5a8f68" stroke-width="1.8"/><path d="M1468.8 1518 H2000" stroke="#5a8f68" stroke-width="1.8"/><path d="M1469.0 1141.5 C1473.5 1141.5 1472.4 1139.0 1478.0 1139.0 C1483.6 1139.0 1482.5 1141.5 1487.0 1141.5 Z" fill="#ececec" stroke="#808080" stroke-width="1.1"/><path d="M1512.0 1141.5 C1516.0 1141.5 1515.0 1139.0 1520.0 1139.0 C1525.0 1139.0 1524.0 1141.5 1528.0 1141.5 Z" fill="#ececec" stroke="#808080" stroke-width="1.1"/><path d="M1578.0 1141.5 C1582.5 1141.5 1581.4 1137.5 1587.0 1137.5 C1592.6 1137.5 1591.5 1141.5 1596.0 1141.5 Z" fill="#ececec" stroke="#808080" stroke-width="1.1"/><path d="M1595.0 1141.5 C1599.8 1141.5 1598.6 1124.5 1604.5 1124.5 C1610.4 1124.5 1609.2 1141.5 1614.0 1141.5 Z" fill="#ececec" stroke="#808080" stroke-width="1.1"/><path d="M1617.0 1141.5 C1621.0 1141.5 1620.0 1137.0 1625.0 1137.0 C1630.0 1137.0 1629.0 1141.5 1633.0 1141.5 Z" fill="#ececec" stroke="#808080" stroke-width="1.1"/><path d="M1638.5 1141.5 C1643.0 1141.5 1641.9 1128.5 1647.5 1128.5 C1653.1 1128.5 1652.0 1141.5 1656.5 1141.5 Z" fill="#ececec" stroke="#808080" stroke-width="1.1"/><path d="M1659.5 1141.5 C1663.5 1141.5 1662.5 1137.0 1667.5 1137.0 C1672.5 1137.0 1671.5 1141.5 1675.5 1141.5 Z" fill="#ececec" stroke="#808080" stroke-width="1.1"/><path d="M1679.5 1141.5 C1683.8 1141.5 1682.7 1127.0 1688.0 1127.0 C1693.3 1127.0 1692.2 1141.5 1696.5 1141.5 Z" fill="#ececec" stroke="#808080" stroke-width="1.1"/><path d="M1701.5 1141.5 C1705.2 1141.5 1704.3 1137.0 1709.0 1137.0 C1713.7 1137.0 1712.8 1141.5 1716.5 1141.5 Z" fill="#ececec" stroke="#808080" stroke-width="1.1"/><path d="M1721.5 1141.5 C1725.8 1141.5 1724.7 1128.5 1730.0 1128.5 C1735.3 1128.5 1734.2 1141.5 1738.5 1141.5 Z" fill="#ececec" stroke="#808080" stroke-width="1.1"/><path d="M1744.0 1141.5 C1747.5 1141.5 1746.7 1137.5 1751.0 1137.5 C1755.3 1137.5 1754.5 1141.5 1758.0 1141.5 Z" fill="#ececec" stroke="#808080" stroke-width="1.1"/><path d="M1762.5 1141.5 C1767.0 1141.5 1765.9 1127.0 1771.5 1127.0 C1777.1 1127.0 1776.0 1141.5 1780.5 1141.5 Z" fill="#ececec" stroke="#808080" stroke-width="1.1"/><path d="M1785.5 1141.5 C1789.2 1141.5 1788.3 1137.5 1793.0 1137.5 C1797.7 1137.5 1796.8 1141.5 1800.5 1141.5 Z" fill="#ececec" stroke="#808080" stroke-width="1.1"/><path d="M1848.0 1141.5 C1854.0 1141.5 1852.6 1138.5 1860.0 1138.5 C1867.4 1138.5 1866.0 1141.5 1872.0 1141.5 Z" fill="#ececec" stroke="#808080" stroke-width="1.1"/><path d="M1982.0 1141.5 C1987.0 1141.5 1985.8 1137.0 1992.0 1137.0 C1998.2 1137.0 1997.0 1141.5 2002.0 1141.5 Z" fill="#ececec" stroke="#808080" stroke-width="1.1"/><path d="M1578.0 1141.5 C1582.5 1141.5 1581.4 1139.0 1587.0 1139.0 C1592.6 1139.0 1591.5 1141.5 1596.0 1141.5 Z" fill="#fcefc0" stroke="#ecc040" stroke-width="1.4"/><path d="M1594.5 1141.5 C1599.5 1141.5 1598.3 1134.0 1604.5 1134.0 C1610.7 1134.0 1609.5 1141.5 1614.5 1141.5 Z" fill="#fcefc0" stroke="#ecc040" stroke-width="1.4"/><path d="M1617.0 1141.5 C1621.0 1141.5 1620.0 1138.0 1625.0 1138.0 C1630.0 1138.0 1629.0 1141.5 1633.0 1141.5 Z" fill="#fcefc0" stroke="#ecc040" stroke-width="1.4"/><path d="M1638.5 1141.5 C1643.0 1141.5 1641.9 1134.0 1647.5 1134.0 C1653.1 1134.0 1652.0 1141.5 1656.5 1141.5 Z" fill="#fcefc0" stroke="#ecc040" stroke-width="1.4"/><path d="M1679.5 1141.5 C1683.8 1141.5 1682.7 1134.0 1688.0 1134.0 C1693.3 1134.0 1692.2 1141.5 1696.5 1141.5 Z" fill="#fcefc0" stroke="#ecc040" stroke-width="1.4"/><path d="M1701.5 1141.5 C1705.2 1141.5 1704.3 1137.5 1709.0 1137.5 C1713.7 1137.5 1712.8 1141.5 1716.5 1141.5 Z" fill="#fcefc0" stroke="#ecc040" stroke-width="1.4"/><path d="M1721.5 1141.5 C1725.8 1141.5 1724.7 1134.5 1730.0 1134.5 C1735.3 1134.5 1734.2 1141.5 1738.5 1141.5 Z" fill="#fcefc0" stroke="#ecc040" stroke-width="1.4"/><path d="M1744.0 1141.5 C1747.5 1141.5 1746.7 1138.0 1751.0 1138.0 C1755.3 1138.0 1754.5 1141.5 1758.0 1141.5 Z" fill="#fcefc0" stroke="#ecc040" stroke-width="1.4"/><path d="M1762.5 1141.5 C1767.0 1141.5 1765.9 1136.0 1771.5 1136.0 C1777.1 1136.0 1776.0 1141.5 1780.5 1141.5 Z" fill="#fcefc0" stroke="#ecc040" stroke-width="1.4"/><path d="M1785.5 1141.5 C1789.2 1141.5 1788.3 1138.0 1793.0 1138.0 C1797.7 1138.0 1796.8 1141.5 1800.5 1141.5 Z" fill="#fcefc0" stroke="#ecc040" stroke-width="1.4"/><path d="M1856.0 1141.5 C1860.0 1141.5 1859.0 1138.5 1864.0 1138.5 C1869.0 1138.5 1868.0 1141.5 1872.0 1141.5 Z" fill="#fcefc0" stroke="#ecc040" stroke-width="1.4"/><path d="M1575 1140.9 H1800" stroke="#e88a6a" stroke-width="1"/><path d="M1468.8 1141.5 H2000" stroke="#bf92e6" stroke-width="2.1"/></svg>
</body></html>
